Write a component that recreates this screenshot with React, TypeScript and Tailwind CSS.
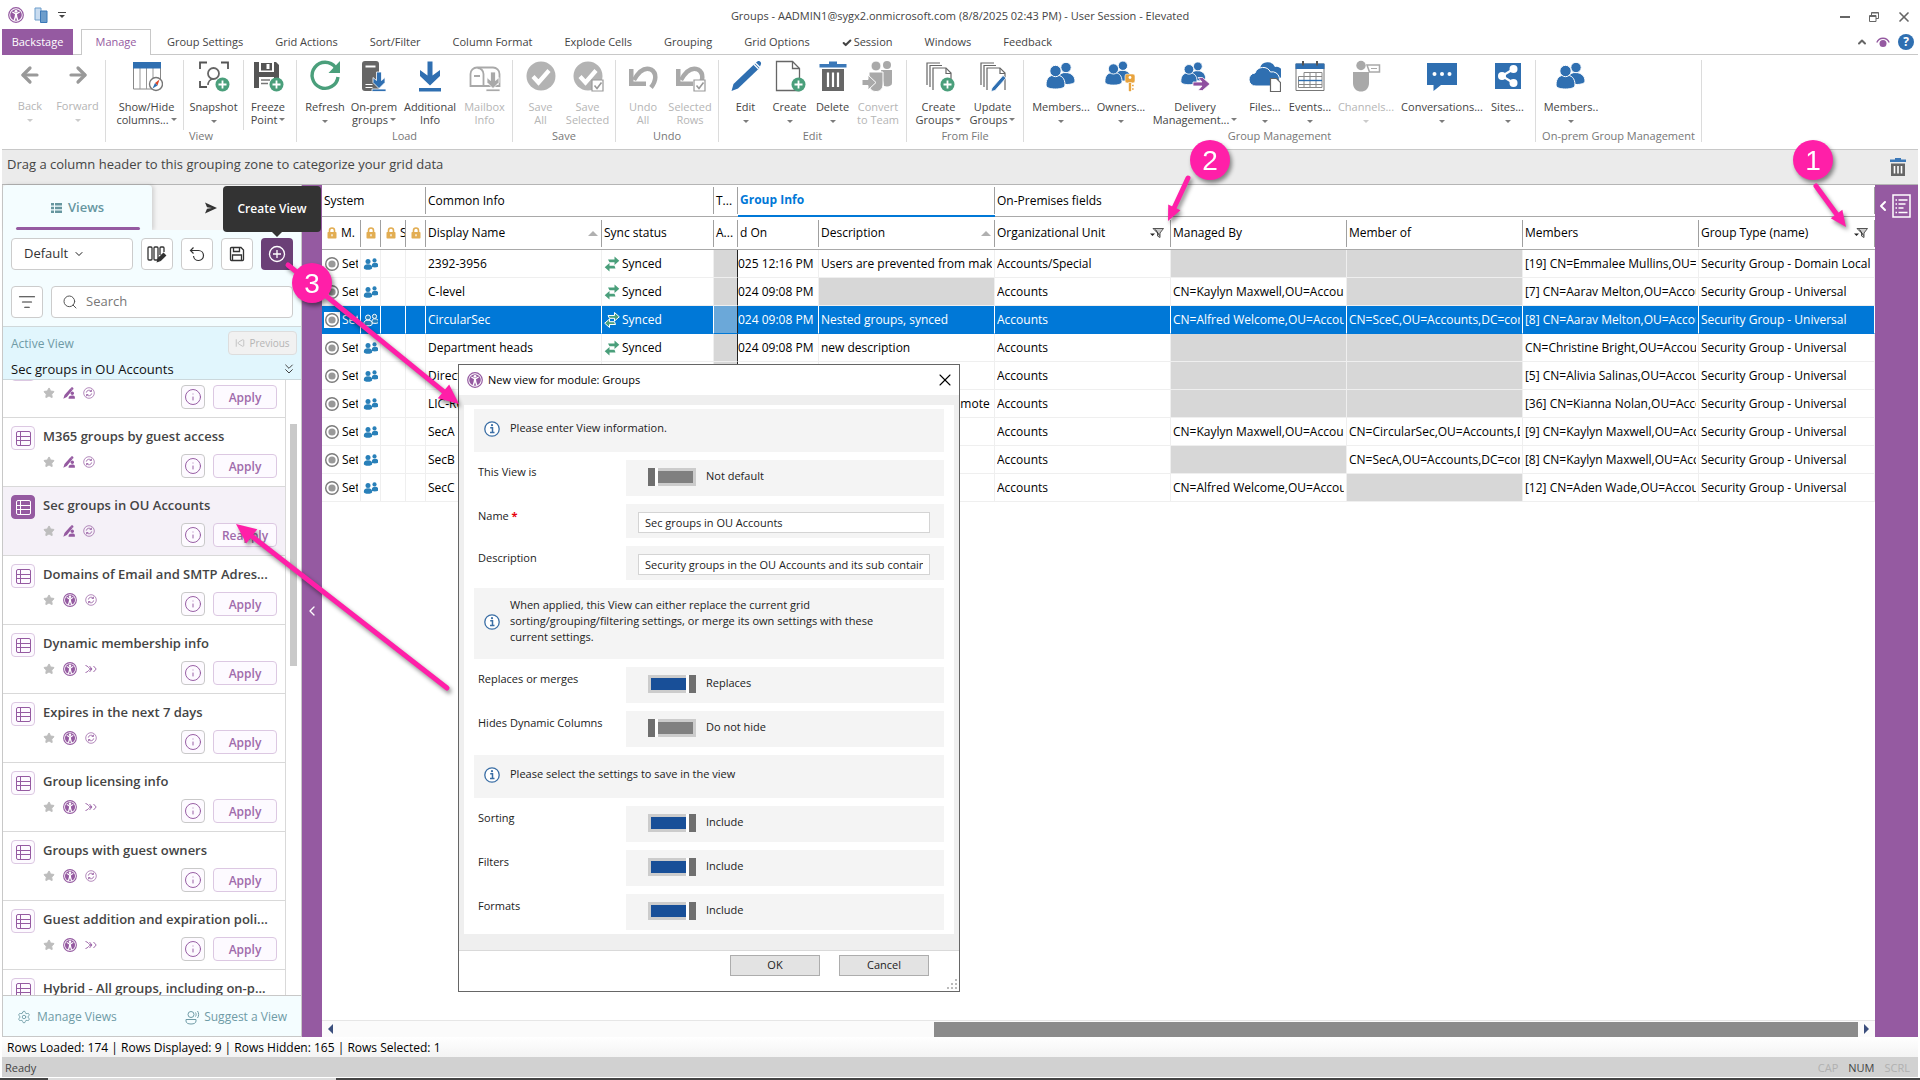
import React, { useState } from 'react';
import clsx from 'clsx';
import {
  ArrowLeft,
  ArrowRight,
  Check,
  ChevronDown,
  ChevronLeft,
  ChevronUp,
  ChevronsDown,
  Info,
  ListFilter,
  Search,
  Settings,
  SkipBack,
  Star,
  X,
} from 'lucide-react';

const BLUE = '#2f6fb1';
const GREEN = '#4a9f7b';
const GRAY = '#a9a9a9';
const DARK = '#666666';
const PURPLE = '#955aa1';
const PINK = '#ff1fa8';

/* ---------- ribbon icons, all on a 32 x 32 grid ---------- */

function Icon({ children }: { children: React.ReactNode }) {
  return (
    <svg viewBox="0 0 32 32" className="size-8" fill="none" aria-hidden="true">
      {children}
    </svg>
  );
}

function PlusBadge() {
  return (
    <g>
      <circle cx="24.5" cy="24.5" r="7" fill={GREEN} />
      <path d="M24.5 20.5v8M20.5 24.5h8" stroke="#fff" strokeWidth="1.8" />
    </g>
  );
}

function CheckBadge() {
  return (
    <g>
      <path d="M20 20h11v11h-11z" fill="#fff" stroke="#999" strokeWidth="1.2" />
      <path d="M22.5 25.500l2.500 3l4.500-6" stroke="#999" strokeWidth="1.6" />
    </g>
  );
}

function PeopleShapes({ color = BLUE }: { color?: string }) {
  return (
    <g fill={color} stroke="#fff" strokeWidth="1">
      <path d="M12 23c0-7 3-10.500 8.500-10.500S30 16 30 21c0 2.500-4 3.500-9 3.500z" />
      <circle cx="21" cy="7.500" r="5.200" />
      <path d="M1 25c0-7 3.500-10 9.500-10s9.500 3 9.500 10c0 3-4.500 4-9.500 4S1 28 1 25z" />
      <circle cx="10.500" cy="11" r="5.700" />
    </g>
  );
}

function PageStack() {
  return (
    <g stroke="#666" strokeWidth="1.200">
      <path d="M4 25V3h13M7 27V5.500h12" />
      <path d="M10 30V8h13l5 5v17" fill="#fff" />
      <path d="M23 8v5.500h5" />
    </g>
  );
}

function DownArrow({ color = BLUE, x = 0 }: { color?: string; x?: number }) {
  return (
    <g transform={`translate(${x} 0)`} fill={color} stroke="#fff" strokeWidth="0.8">
      <path d="M18.500 12h5v8.500l3.500-3v5L21 28.500L15 22.500v-5l3.500 3z" />
      <path d="M14 29h14v2.500h-14z" />
    </g>
  );
}

const icons: Record<string, React.ReactNode> = {
  back: <ArrowLeft className="size-6" color="#999" strokeWidth={3.2} />,
  forward: <ArrowRight className="size-6" color="#999" strokeWidth={3.2} />,
  columns: (
    <Icon>
      <path d="M2.500 3v26h27V3" stroke="#888" />
      <path d="M9 8v21M15.500 8v21M22 8v21" stroke="#999" />
      <path d="M2 2h28v6.500H2z" fill={BLUE} />
      <circle cx="25" cy="24" r="6.500" fill="#fff" stroke="#777" strokeWidth="1.400" />
      <path d="M28.500 19.500l-2 6l-2.500-2.500z" fill="#d9482b" />
      <path d="M21.500 28.500l2.500-5.500l2.500 2.500z" fill={BLUE} />
    </Icon>
  ),
  snapshot: (
    <Icon>
      <path d="M2 9V2.500h7M23 2.500h7V9M2 21v6h7" stroke="#555" strokeWidth="1.800" />
      <circle cx="15.500" cy="13.500" r="5.500" stroke="#666" strokeWidth="1.800" />
      <path d="M10 25c0-3 2-6 5-6" stroke="#666" strokeWidth="1.600" />
      <PlusBadge />
    </Icon>
  ),
  freeze: (
    <Icon>
      <path d="M2 2h22l3 3v23H2z" fill="#555" />
      <path d="M7 2h15v10H7z" fill="#fff" />
      <path d="M9 3h11v7.500H9z" fill="#555" />
      <path d="M14.500 4h3v5h-3z" fill="#fff" />
      <path d="M7 17h15v11H7z" fill="#fff" />
      <path d="M9 20h9M9 23.500h7" stroke="#777" strokeWidth="1.300" />
      <PlusBadge />
    </Icon>
  ),
  refresh: (
    <Icon>
      <path d="M26.500 7.500A13 13 0 1 0 29 17" stroke={GREEN} strokeWidth="3.400" />
      <path d="M31 1v12H19.500z" fill={GREEN} />
    </Icon>
  ),
  server: (
    <Icon>
      <rect x="4" y="1" width="17" height="30" rx="3" fill="#666" />
      <path d="M7.500 6.500h10" stroke="#fff" strokeWidth="2" />
      <path d="M7.500 24.500h7M7.500 27.500h7" stroke="#fff" strokeWidth="1.200" />
      <DownArrow />
    </Icon>
  ),
  download: (
    <Icon>
      <path d="M13.500 1.500h5v14l7.500-5.500v6L16 25.500L6 16v-6l7.500 5.500z" fill={BLUE} />
      <path d="M5 28h22v3.500H5z" fill={BLUE} />
    </Icon>
  ),
  mailbox: (
    <Icon>
      <path
        d="M1.500 26V14a6.500 6.500 0 0 1 6.500-6.500h16a6.500 6.500 0 0 1 6.500 6.500v12z"
        stroke={GRAY}
        strokeWidth="1.800"
      />
      <path d="M14.500 26V14A6 6 0 0 0 8.500 8M5 16h6" stroke={GRAY} strokeWidth="1.800" />
      <DownArrow color={GRAY} x={3} />
    </Icon>
  ),
  check: (
    <Icon>
      <circle cx="16" cy="16" r="14.500" fill="#b3b3b3" />
      <path d="M8 16.500l5.500 6l10.500-12" stroke="#fff" strokeWidth="4.200" />
    </Icon>
  ),
  checkSelected: (
    <Icon>
      <circle cx="16" cy="16" r="14.500" fill="#b3b3b3" />
      <path d="M8 16.500l5.500 6l10.500-12" stroke="#fff" strokeWidth="4.200" />
      <CheckBadge />
    </Icon>
  ),
  undo: (
    <Icon>
      <path d="M7 20C12 11 18 7 24 9.500c6 3.500 5.500 11 0 18" stroke={GRAY} strokeWidth="4.500" />
      <path d="M2 9h4.500v12.500H19V26H2z" fill={GRAY} />
    </Icon>
  ),
  undoSelected: (
    <Icon>
      <path d="M7 20C12 11 18 7 24 9.500c6 3.500 5.500 11 0 18" stroke={GRAY} strokeWidth="4.500" />
      <path d="M2 9h4.500v12.500H19V26H2z" fill={GRAY} />
      <CheckBadge />
    </Icon>
  ),
  pencil: (
    <Icon>
      <path d="M3.500 24L25 3.500l4.500 4.500L8 28.500l-6.500 2.500z" fill={BLUE} />
      <path d="M26 2.500l2-1.500c2-.5 3.500 1.500 3 3l-1 2.500z" fill={BLUE} />
      <path d="M23.500 4l5 5" stroke="#fff" strokeWidth="1.200" />
    </Icon>
  ),
  page: (
    <Icon>
      <path d="M2.500 1.500h16l7 7v22h-23z" stroke="#666" strokeWidth="1.300" fill="#fff" />
      <path d="M18.500 1.500v7h7" stroke="#666" strokeWidth="1.300" />
      <PlusBadge />
    </Icon>
  ),
  trash: (
    <Icon>
      <path d="M2.500 4h27v3.500h-27zM12 1.500h8V4h-8z" fill="#3b78b8" />
      <path d="M5 9h22v22H5z" fill={DARK} />
      <path d="M11 12.500v14.500M16 12.500v14.500M21 12.500v14.500" stroke="#fff" strokeWidth="2.200" />
    </Icon>
  ),
  convert: (
    <Icon>
      <g fill={GRAY}>
        <circle cx="25" cy="5" r="4" />
        <path d="M19 10h11v13c0 3-4 4-8 3z" />
        <g stroke="#fff" strokeWidth="1">
          <circle cx="14" cy="6" r="5" />
          <path d="M7 12h14v12c0 6-4 7.500-7 7.500S7 30 7 24z" />
          <path d="M0 19.500h6V15l8 7.500l-8 7.500v-4.500H0z" />
        </g>
      </g>
    </Icon>
  ),
  pagesPlus: (
    <Icon>
      <PageStack />
      <PlusBadge />
    </Icon>
  ),
  pagesPencil: (
    <Icon>
      <PageStack />
      <path d="M15 28L26 15.500l3 2.500L18 30.500l-4 1z" fill={BLUE} stroke="#fff" strokeWidth="0.800" />
    </Icon>
  ),
  people: (
    <Icon>
      <PeopleShapes />
    </Icon>
  ),
  peopleKey: (
    <Icon>
      <g transform="translate(-1 -1) scale(0.900)">
        <PeopleShapes />
      </g>
      <g fill="#e8a33d" stroke="#fff" strokeWidth="0.600">
        <rect x="20" y="14" width="10" height="9" rx="2" />
        <path d="M23.500 22.500h3v8l-1.500 1.500L23.500 30.500zM26.500 24.500h2.500v2h-2.500zM26.500 28h2.500v2h-2.500z" />
      </g>
      <circle cx="25" cy="17.500" r="1.400" fill="#fff" />
    </Icon>
  ),
  peopleArrow: (
    <Icon>
      <g transform="translate(1 0) scale(0.850)">
        <PeopleShapes />
      </g>
      <path
        d="M14 22h9l-4-4.500h4.500l7.500 6.500l-7.500 6.500H19l4-4.500h-9z"
        fill="#8f4fa0"
        stroke="#fff"
        strokeWidth="0.800"
      />
    </Icon>
  ),
  cloud: (
    <Icon>
      <path d="M14 19a6 6 0 0 1-3-11a8 8 0 0 1 15-1a6 6 0 0 1 3 12z" fill={BLUE} />
      <path
        d="M7 26a6.500 6.500 0 0 1-1-13a8.500 8.500 0 0 1 15.500-1a7 7 0 0 1 3.500 14z"
        fill={BLUE}
        stroke="#fff"
        strokeWidth="1"
      />
      <path d="M21.500 18.500h6l4 4v9h-10z" fill="#fff" stroke="#666" strokeWidth="1.200" />
    </Icon>
  ),
  calendar: (
    <Icon>
      <path d="M2 4h28v26.500H2z" stroke="#777" fill="#fff" />
      <path d="M1.500 3.500h29v5.500h-29z" fill={BLUE} />
      <path d="M9 1v4.500M23 1v4.500" stroke="#555" strokeWidth="2" />
      <path
        d="M10 12.500h18M4.500 16.500H28M4.500 24.500H28M10 12.500v15M16 12.500v15M22 12.500v15M28 12.500v15M4.500 16.500v11M4.500 27.500H28"
        stroke="#888"
      />
      <path d="M4.500 20.500H28" stroke={BLUE} strokeWidth="1.400" />
    </Icon>
  ),
  channel: (
    <Icon>
      <circle cx="11" cy="5.500" r="4.700" fill={GRAY} />
      <path d="M3 12h16v11c0 6-4 8.500-8 8.500S3 29 3 23z" fill={GRAY} />
      <path d="M17 5h12.500v7H19.500z" stroke={GRAY} strokeWidth="1.500" />
      <path d="M21 8.500h6" stroke={GRAY} />
    </Icon>
  ),
  chat: (
    <Icon>
      <path d="M1 3h30v22H15l-7.500 6V25H1z" fill={BLUE} />
      <g fill="#fff">
        <circle cx="8.500" cy="14" r="2" />
        <circle cx="16" cy="14" r="2" />
        <circle cx="23.500" cy="14" r="2" />
      </g>
    </Icon>
  ),
  share: (
    <Icon>
      <path d="M3 3h26v26H3z" fill={BLUE} />
      <path d="M21.500 9L10 16l11.500 7" stroke="#fff" strokeWidth="2.200" />
      <g fill="#fff">
        <circle cx="21.500" cy="9" r="4" />
        <circle cx="10" cy="16" r="4" />
        <circle cx="21.500" cy="23" r="4" />
      </g>
    </Icon>
  ),
};

/* ---------- small icons ---------- */

function Logo({ className }: { className: string }) {
  return (
    <svg viewBox="0 0 16 16" className={className} aria-hidden="true">
      <circle cx="8" cy="8" r="7.300" fill="#fff" stroke={PURPLE} strokeWidth="1.200" />
      <circle cx="8" cy="8" r="5.800" fill={PURPLE} />
      <g fill="#fff">
        <circle cx="8" cy="4.300" r="1.400" />
        <path d="M4 5.500l3 1.800l-.4 2.500l-1.100 3.600l1.300.3L8 10.200l1.200 3.500l1.300-.3l-1.100-3.600L9 7.300l3-1.800l-.6-1L8 6.300L4.600 4.500z" />
      </g>
    </svg>
  );
}

function LockIcon() {
  return (
    <svg viewBox="0 0 10 12" className="ml-[3px] h-3 w-2.5 shrink-0" aria-hidden="true">
      <path d="M2.500 5.500V3.500a2.500 2.500 0 0 1 5 0v2" fill="none" stroke="#e2ad52" strokeWidth="1.600" />
      <rect x="0.500" y="5" width="9" height="6.500" rx="0.800" fill="#e2ad52" />
      <path d="M5 7.200v2" stroke="#fff" strokeWidth="1.300" />
    </svg>
  );
}

function TargetIcon() {
  return (
    <svg viewBox="0 0 16 16" className="size-4 shrink-0 bg-white" aria-hidden="true">
      <circle cx="8" cy="8" r="6.300" fill="none" stroke="#7b7b7b" strokeWidth="1.400" />
      <circle cx="8" cy="8" r="3.600" fill="#999" />
    </svg>
  );
}

function GroupIcon({ selected }: { selected?: boolean }) {
  return (
    <svg
      viewBox="0 0 16 14"
      className="h-3.5 w-4 shrink-0"
      fill="#2980b9"
      stroke={selected ? '#fff' : 'none'}
      strokeWidth="1"
      aria-hidden="true"
    >
      <circle cx="11.500" cy="3.400" r="2.100" />
      <path d="M9 10c-.5-3 .5-4.200 2.800-4.200s3.700 1 3.700 3.200c0 1-2 1.400-3.500 1.400z" />
      <circle cx="5" cy="4.500" r="2.500" />
      <path d="M.8 11c0-2.600 1.200-3.800 4.200-3.800s4.200 1.200 4.200 3.800c0 1.200-1.800 1.800-4.200 1.800S.8 12.200.8 11z" />
    </svg>
  );
}

function SyncIcon({ selected }: { selected?: boolean }) {
  return (
    <svg viewBox="0 0 16 16" className="size-4 shrink-0" aria-hidden="true">
      <g fill="#4a9f7b" stroke={selected ? '#fff' : 'none'} strokeWidth="1">
        <path d="M4 3.500h6.500V.5L15.300 4.800L10.500 9V6.300H5.500z" />
        <path d="M11.500 12.500H5.500v3L.7 11.200L5.500 7v2.700h5z" />
      </g>
    </svg>
  );
}

function FunnelIcon() {
  return (
    <svg viewBox="0 0 14 10" className="mr-[3px] h-2.5 w-3.5 shrink-0" aria-hidden="true">
      <path d="M3 .5h10.500L10 5v4.500L7.500 8V5z" fill="#ccc" stroke="#444" strokeWidth="0.900" />
      <path d="M5.500 1.500l4 6" stroke="#333" strokeWidth="1" />
      <path d="M0 5.500h5L2.500 8z" fill="#222" />
    </svg>
  );
}

function SortMark() {
  return <span className="shrink-0 border-x-5 border-b-5 border-x-transparent border-b-[#b0b0b0]" />;
}

function ViewIcon({ active }: { active?: boolean }) {
  return (
    <span
      className={clsx(
        'flex size-6 shrink-0 items-center justify-center rounded-sm border',
        active ? 'border-[#955aa1] bg-[#955aa1] text-white' : 'border-[#dcc8e2] bg-[#fdfaff] text-[#955aa1]'
      )}
    >
      <svg viewBox="0 0 15 15" className="size-[15px]" fill="none" stroke="currentColor" aria-hidden="true">
        <rect x="0.500" y="0.500" width="14" height="14" rx="1.500" />
        <path d="M4.500 .5v14M.5 5.500h14M.5 9.500h14" />
      </svg>
    </span>
  );
}

function AuthorIcon() {
  return (
    <svg viewBox="0 0 12 12" className="size-3" fill={PURPLE} aria-hidden="true">
      <path d="M.3 11.700L1.500 8L7.500 1.200l2 1.800L3.800 10z" />
      <path d="M8.300.6c1-.8 2.600.4 2 1.600l-.8.8l-1.900-1.700z" />
      <circle cx="9.300" cy="6.300" r="1.700" />
      <path d="M5.500 11.700c0-2.300 1-3.200 3.700-3.200s2.700.9 2.700 3.200z" />
    </svg>
  );
}

function ReloadBadge() {
  return (
    <svg viewBox="0 0 12 12" className="size-3" fill="none" stroke={PURPLE} strokeWidth="0.800" aria-hidden="true">
      <circle cx="6" cy="6" r="5.300" strokeWidth="0.700" />
      <path d="M3.300 5.600a2.800 2.800 0 0 1 4.900-1.400M8.700 6.400a2.800 2.800 0 0 1-4.900 1.400" />
      <path d="M8.500 2.700v1.800H6.700M3.500 9.300V7.500h1.800" />
    </svg>
  );
}

function MergeBadge() {
  return (
    <svg viewBox="0 0 12 9" className="h-2.5 w-3" fill="none" stroke={PURPLE} strokeWidth="0.900" aria-hidden="true">
      <path d="M.5 1c2.500 0 3 3.500 6 3.500C3.500 4.500 3 8 .5 8M4.500 1.500L7 4.500L4.500 7.500M8.500 1.500l2.700 3L8.500 7.500" />
    </svg>
  );
}

/* ---------- ribbon ---------- */

type Tool = {
  icon: string;
  lines: string[];
  width: string;
  arrow?: boolean;
  disabled?: boolean;
  divider?: boolean;
};

const ribbon: { label: string; tools: Tool[]; className?: string }[] = [
  {
    label: '',
    tools: [
      { icon: 'back', lines: ['Back'], width: 'w-[48px]', arrow: true, disabled: true },
      { icon: 'forward', lines: ['Forward'], width: 'w-[47px]', arrow: true, disabled: true },
    ],
  },
  {
    label: 'View',
    tools: [
      { icon: 'columns', lines: ['Show/Hide', 'columns...'], width: 'w-[74px]', arrow: true, divider: true },
      { icon: 'snapshot', lines: ['Snapshot'], width: 'w-[60px]', arrow: true, divider: true },
      { icon: 'freeze', lines: ['Freeze', 'Point'], width: 'w-[48px]', arrow: true },
    ],
  },
  {
    label: 'Load',
    tools: [
      { icon: 'refresh', lines: ['Refresh'], width: 'w-[48px]', arrow: true },
      { icon: 'server', lines: ['On-prem', 'groups'], width: 'w-[50px]', arrow: true },
      { icon: 'download', lines: ['Additional', 'Info'], width: 'w-[62px]' },
      { icon: 'mailbox', lines: ['Mailbox', 'Info'], width: 'w-[47px]', disabled: true },
    ],
  },
  {
    label: 'Save',
    tools: [
      { icon: 'check', lines: ['Save', 'All'], width: 'w-[47px]', disabled: true },
      { icon: 'checkSelected', lines: ['Save', 'Selected'], width: 'w-[47px]', disabled: true },
    ],
  },
  {
    label: 'Undo',
    tools: [
      { icon: 'undo', lines: ['Undo', 'All'], width: 'w-[46px]', disabled: true },
      { icon: 'undoSelected', lines: ['Selected', 'Rows'], width: 'w-[48px]', disabled: true },
    ],
  },
  {
    label: 'Edit',
    tools: [
      { icon: 'pencil', lines: ['Edit'], width: 'w-[45px]', arrow: true },
      { icon: 'page', lines: ['Create'], width: 'w-[43px]', arrow: true },
      { icon: 'trash', lines: ['Delete'], width: 'w-[43px]', arrow: true },
      { icon: 'convert', lines: ['Convert', 'to Team'], width: 'w-[48px]', disabled: true },
    ],
  },
  {
    label: 'From File',
    tools: [
      { icon: 'pagesPlus', lines: ['Create', 'Groups'], width: 'w-[55px]', arrow: true },
      { icon: 'pagesPencil', lines: ['Update', 'Groups'], width: 'w-[53px]', arrow: true },
    ],
  },
  {
    label: 'Group Management',
    tools: [
      { icon: 'people', lines: ['Members...'], width: 'w-[66px]', arrow: true },
      { icon: 'peopleKey', lines: ['Owners...'], width: 'w-[54px]', arrow: true },
      { icon: 'peopleArrow', lines: ['Delivery', 'Management...'], width: 'w-[94px]', arrow: true },
      { icon: 'cloud', lines: ['Files...'], width: 'w-[46px]', arrow: true },
      { icon: 'calendar', lines: ['Events...'], width: 'w-[44px]', arrow: true },
      { icon: 'channel', lines: ['Channels...'], width: 'w-[68px]', arrow: true, disabled: true },
      { icon: 'chat', lines: ['Conversations...'], width: 'w-[84px]', arrow: true },
      { icon: 'share', lines: ['Sites...'], width: 'w-[47px]', arrow: true },
    ],
  },
  {
    label: 'On-prem Group Management',
    tools: [{ icon: 'people', lines: ['Members..'], width: 'w-[62px]', arrow: true }],
    className: 'w-[166px]',
  },
];

function Caret() {
  return <span className="inline-block border-x-3 border-t-3 border-x-transparent border-t-current opacity-70" />;
}

function RibbonButton({ tool }: { tool: Tool }) {
  return (
    <button
      type="button"
      disabled={tool.disabled}
      className={clsx(
        'flex h-[70px] shrink-0 flex-col items-center text-[11px] leading-[13px] whitespace-nowrap',
        tool.width,
        tool.disabled ? 'text-[#b5b5b5]' : 'text-[#444]',
        tool.divider && 'border-r border-[#dcdcdc]'
      )}
    >
      <span className="mb-2 flex h-8 items-center justify-center">{icons[tool.icon]}</span>
      <span>{tool.lines[0]}</span>
      <span className={clsx('flex items-center gap-0.5', tool.lines[1] ? 'h-[13px]' : 'h-[19px]')}>
        {tool.lines[1]}
        {tool.arrow && <Caret />}
      </span>
    </button>
  );
}

function Ribbon() {
  return (
    <div className="flex h-[95px] shrink-0 border-b border-[#c8c8c8] pt-[5px] pb-[7px]">
      {ribbon.map((group) => (
        <section
          key={group.label}
          className={clsx('flex shrink-0 flex-col border-r border-[#dcdcdc] px-1', group.className)}
        >
          <div className="flex">
            {group.tools.map((tool) => (
              <RibbonButton key={tool.lines.join(' ')} tool={tool} />
            ))}
          </div>
          <h2 className="text-center text-[11px] leading-3 whitespace-nowrap text-[#777]">{group.label}</h2>
        </section>
      ))}
    </div>
  );
}

const tabs = [
  'Group Settings',
  'Grid Actions',
  'Sort/Filter',
  'Column Format',
  'Explode Cells',
  'Grouping',
  'Grid Options',
  'Session',
  'Windows',
  'Feedback',
];

function TitleBar() {
  return (
    <header>
      <div className="grid h-[29px] grid-cols-[1fr_auto_1fr] items-center">
        <div className="flex items-center gap-2.5 pl-1.5">
          <Logo className="size-4" />
          <button type="button" aria-label="Duplicate window" className="flex items-center">
            <svg viewBox="0 0 14 16" className="h-4 w-3.5" aria-hidden="true">
              <path d="M1 1h6v12H1z" fill="#c9dcf0" stroke="#6d9dcb" />
              <path d="M6.500 4h6.500v11.500H6.500z" fill="#6d9dcb" stroke="#3b78b8" />
            </svg>
          </button>
          <button type="button" aria-label="Customize toolbar" className="flex flex-col items-center gap-0.5">
            <span className="h-px w-2 bg-[#444]" />
            <span className="border-x-3 border-t-3 border-x-transparent border-t-[#444]" />
          </button>
        </div>
        <h1 className="pt-1 text-[11px] text-[#444]">
          Groups - AADMIN1@sygx2.onmicrosoft.com (8/8/2025 02:43 PM) - User Session - Elevated
        </h1>
        <div className="flex items-center justify-end gap-4 pt-1 pr-1.5 text-[#666]">
          <button type="button" aria-label="Minimize" className="flex size-3 items-center">
            <span className="h-0.5 w-2.5 bg-[#666]" />
          </button>
          <button type="button" aria-label="Restore">
            <svg viewBox="0 0 12 12" className="size-3" fill="none" stroke="currentColor" aria-hidden="true">
              <path d="M3.500 4V1.500h7v6H8M3.500 2h7" />
              <path d="M1.500 4.500h6.500v6H1.500zM1.500 5.500h6.500" />
            </svg>
          </button>
          <button type="button" aria-label="Close">
            <X className="size-4" strokeWidth={2.500} />
          </button>
        </div>
      </div>
      <nav className="flex h-[26px] text-[11px] text-[#444]">
        <button type="button" className="w-[71px] bg-[#955aa1] text-white">
          Backstage
        </button>
        <span className="w-2 border-b border-[#c8c8c8]" />
        <button type="button" className="w-[70px] border border-b-0 border-[#c8c8c8] text-[#955aa1]">
          Manage
        </button>
        <div className="flex flex-1 border-b border-[#c8c8c8] pt-0.5">
          {tabs.map((tab) => (
            <button key={tab} type="button" className="flex items-center gap-0.5 px-4 whitespace-nowrap">
              {tab === 'Session' && <Check className="size-2.5" strokeWidth={5} />}
              {tab}
            </button>
          ))}
        </div>
        <div className="flex items-center gap-2 border-b border-[#c8c8c8] pr-1 text-[#666]">
          <button type="button" aria-label="Collapse ribbon">
            <ChevronUp className="size-3" strokeWidth={4} />
          </button>
          <button type="button" aria-label="Show">
            <svg viewBox="0 0 14 12" className="h-3 w-3.5" aria-hidden="true">
              <path d="M.8 6.500C3 .8 11 .8 13.200 6.500" fill="none" stroke={PURPLE} strokeWidth="1.300" />
              <circle cx="7" cy="7.500" r="3.500" fill={PURPLE} />
            </svg>
          </button>
          <button
            type="button"
            aria-label="Help"
            className="size-4 rounded-full bg-[#2f6fb1] text-[12px] leading-4 font-bold text-white"
          >
            ?
          </button>
        </div>
      </nav>
    </header>
  );
}

/* ---------- views panel ---------- */

type View = { name: string; author: 'me' | 'app'; badge: 'reload' | 'merge'; active?: boolean };

const views: View[] = [
  { name: 'M365 groups', author: 'me', badge: 'reload' },
  { name: 'M365 groups by guest access', author: 'me', badge: 'reload' },
  { name: 'Sec groups in OU Accounts', author: 'me', badge: 'reload', active: true },
  { name: 'Domains of Email and SMTP Adres...', author: 'app', badge: 'reload' },
  { name: 'Dynamic membership info', author: 'app', badge: 'merge' },
  { name: 'Expires in the next 7 days', author: 'app', badge: 'reload' },
  { name: 'Group licensing info', author: 'app', badge: 'merge' },
  { name: 'Groups with guest owners', author: 'app', badge: 'reload' },
  { name: 'Guest addition and expiration poli...', author: 'app', badge: 'merge' },
  { name: 'Hybrid - All groups, including on-p...', author: 'app', badge: 'reload' },
];

function ViewItem({ view }: { view: View }) {
  return (
    <li
      className={clsx(
        'flex h-[69px] gap-2 border-b border-[#d9d9d9] px-2 pt-2',
        view.active ? 'bg-[#f5f1f8]' : 'bg-white'
      )}
    >
      <ViewIcon active={view.active} />
      <div className="flex min-w-0 flex-1 flex-col">
        <h3 className="h-7 truncate text-[13px] leading-5 font-semibold text-[#444]">{view.name}</h3>
        <div className="flex gap-2">
          <div className="flex h-4 flex-1 items-center gap-2">
            <Star className="size-3" fill="#bdbdbd" color="#bdbdbd" />
            {view.author === 'me' ? <AuthorIcon /> : <Logo className="size-3.5" />}
            {view.badge === 'reload' ? <ReloadBadge /> : <MergeBadge />}
          </div>
          <button
            type="button"
            aria-label={`About ${view.name}`}
            className="flex size-6 items-center justify-center rounded-sm border border-[#c9c9c9] bg-[#fdfaff] text-[#955aa1]"
          >
            <Info className="size-[18px]" strokeWidth={1.300} />
          </button>
          <button
            type="button"
            className="h-6 w-16 rounded-sm border border-[#dcc8e2] bg-[#fdfaff] pt-0.5 text-[12px] leading-5 font-semibold text-[#a06bab]"
          >
            {view.active ? 'Reapply' : 'Apply'}
          </button>
        </div>
      </div>
    </li>
  );
}

const toolButton = 'flex size-8 items-center justify-center rounded-sm border border-[#ccc] bg-white text-[#333]';

function ViewsPanel() {
  const [query, setQuery] = useState('');

  return (
    <aside className="flex w-[300px] shrink-0 flex-col border-x border-b border-[#c8c8c8] bg-white">
      <div className="flex h-[45px] shrink-0 bg-[#f4f4f4]">
        <button
          type="button"
          className="flex w-[149px] flex-col items-center justify-end rounded-t-sm bg-[#f4fdff] text-[13px] font-semibold text-[#66969f] shadow-[2px_0_4px_rgba(0,0,0,0.15)]"
        >
          <span className="flex flex-1 items-center gap-1.5 pt-1">
            <svg viewBox="0 0 11 10" className="h-2.5 w-[11px]" fill="currentColor" aria-hidden="true">
              <path d="M0 0h3v2.500H0zM4 0h7v2.500H4zM0 3.700h3v2.500H0zM4 3.700h7v2.500H4zM0 7.500h3V10H0zM4 7.500h7V10H4z" />
            </svg>
            Views
          </span>
          <span className="h-[3px] w-[124px] rounded-full bg-[#955aa1]" />
        </button>
        <button type="button" aria-label="Jobs" className="flex flex-1 items-center pl-[53px]">
          <svg viewBox="0 0 12 12" className="size-3" fill="#333" aria-hidden="true">
            <path d="M0 .5L12 6L0 11.500L2 6.800L7 6L2 5.200z" />
          </svg>
        </button>
      </div>

      <div className="flex shrink-0 flex-col gap-4 border-b border-[#d0d8da] bg-[#f4fdff] p-2">
        <div className="flex gap-2">
          <div className="relative flex flex-1 items-center">
            <select
              aria-label="Layout"
              className="h-8 w-full appearance-none rounded-sm border border-[#ccc] bg-white pl-3 text-[13px] text-[#333]"
            >
              <option>Default</option>
            </select>
            <ChevronDown className="pointer-events-none absolute left-[62px] size-3" strokeWidth={1.800} />
          </div>
          <button type="button" aria-label="Edit columns" className={toolButton}>
            <svg
              viewBox="0 0 20 18"
              className="h-[18px] w-5"
              fill="none"
              stroke="currentColor"
              strokeWidth="1.300"
              aria-hidden="true"
            >
              <rect x="1" y="2" width="4" height="13" rx="1" />
              <rect x="7" y="2" width="4" height="13" rx="1" />
              <path d="M13 10V3a1 1 0 0 1 1-1h2a1 1 0 0 1 1 1v4" />
              <path d="M10.500 16.500l1-3.500l5-4.500l2 2l-5 5z" fill="currentColor" />
            </svg>
          </button>
          <button type="button" aria-label="Reset" className={toolButton}>
            <svg
              viewBox="0 0 16 16"
              className="size-4"
              fill="none"
              stroke="currentColor"
              strokeWidth="1.200"
              aria-hidden="true"
            >
              <path d="M1.500 4.500H9.500a5 5 0 1 1-5 5.500" />
              <path d="M4.500 1.500l-3 3l3 3" />
            </svg>
          </button>
          <button type="button" aria-label="Save view" className={toolButton}>
            <svg
              viewBox="0 0 16 16"
              className="size-4"
              fill="none"
              stroke="currentColor"
              strokeWidth="1.300"
              aria-hidden="true"
            >
              <path d="M1.500 2.500a1 1 0 0 1 1-1h9.500l2.500 2.500v9.500a1 1 0 0 1-1 1h-11a1 1 0 0 1-1-1z" />
              <path d="M4.500 1.500v4h6v-4M3.500 14.500V9h9v5.500" />
            </svg>
          </button>
          <div className="relative">
            <button
              type="button"
              aria-label="Create View"
              className="flex size-8 items-center justify-center rounded-sm bg-[#6b4077] text-white"
            >
              <svg
                viewBox="0 0 18 18"
                className="size-[18px]"
                fill="none"
                stroke="currentColor"
                strokeWidth="1.300"
                aria-hidden="true"
              >
                <circle cx="9" cy="9" r="7.500" />
                <path d="M9 5v8M5 9h8" />
              </svg>
            </button>
            <div
              role="tooltip"
              className="absolute bottom-[38px] left-1/2 z-20 flex h-[46px] w-[98px] -translate-x-[54px] items-center justify-center rounded-sm bg-[#333] text-[12px] font-semibold whitespace-nowrap text-white"
            >
              Create View
              <span className="absolute top-full left-[49px] border-x-5 border-t-5 border-x-transparent border-t-[#333]" />
            </div>
          </div>
        </div>
        <div className="flex gap-2">
          <button type="button" aria-label="Filter views" className={toolButton}>
            <ListFilter className="size-[18px]" strokeWidth={1.600} />
          </button>
          <label className="flex h-8 flex-1 items-center gap-2 rounded-sm border border-[#ccc] bg-white px-2.5">
            <Search className="size-4 text-[#555]" strokeWidth={1.500} />
            <input
              aria-label="Search views"
              placeholder="Search"
              value={query}
              onChange={(e) => setQuery(e.target.value)}
              className="min-w-0 flex-1 bg-transparent text-[13px] outline-none placeholder:text-[#777]"
            />
          </label>
        </div>
      </div>

      <div className="flex h-[53px] shrink-0 flex-col justify-between border-b border-[#ccd8dc] bg-[#e1f6fd] pt-1 pr-1 pl-2">
        <div className="flex items-center justify-between">
          <h2 className="pt-0.5 text-[12px] font-medium text-[#6f9ba6]">Active View</h2>
          <button
            type="button"
            disabled
            className="flex h-6 w-[69px] items-center justify-center gap-1 rounded-sm border border-[#ddd] bg-[#f1f1f1] text-[10px] text-[#b5b5b5]"
          >
            <SkipBack className="size-2.5" strokeWidth={1.800} />
            Previous
          </button>
        </div>
        <div className="flex items-center justify-between">
          <p className="text-[13px] leading-5 font-medium text-[#111]">Sec groups in OU Accounts</p>
          <ChevronsDown className="size-4 text-[#444]" strokeWidth={1.500} />
        </div>
      </div>

      <div className="flex min-h-0 flex-1 overflow-hidden">
        <ul className="-mt-[31px] w-[283px] border-r border-[#d9d9d9]">
          {views
            .filter((view) => view.name.toLowerCase().includes(query.toLowerCase()))
            .map((view) => (
              <ViewItem key={view.name} view={view} />
            ))}
        </ul>
        <div className="mt-11 ml-1 h-[242px] w-[7px] bg-[#c9c9c9]" />
      </div>

      <div className="flex h-[41px] shrink-0 items-center justify-between border-t border-[#c8c8c8] bg-[#f4fdff] px-3.5 pt-0.5 text-[12px] font-medium text-[#6f9ba6]">
        <button type="button" className="flex items-center gap-1.5">
          <Settings className="size-3.5" strokeWidth={1.500} />
          Manage Views
        </button>
        <button type="button" className="flex items-center gap-1">
          <svg viewBox="0 0 15 15" className="size-[15px]" fill="none" stroke="currentColor" aria-hidden="true">
            <circle cx="6" cy="4.500" r="3" />
            <path d="M1 9.500h10v1.500c0 2-2 3-5 3s-5-1-5-3zM10.500 2.500c.8 1 .8 3 0 4M12.500 1c1.500 2 1.500 5 0 7" />
          </svg>
          Suggest a View
        </button>
      </div>
    </aside>
  );
}

/* ---------- grid ---------- */

type Row = {
  name: string;
  createdOn: string;
  description?: string;
  unit: string;
  managedBy?: string;
  memberOf?: string;
  members: string;
  type: string;
};

const UNIVERSAL = 'Security Group - Universal';

const rows: Row[] = [
  {
    name: '2392-3956',
    createdOn: '025 12:16 PM',
    description: 'Users are prevented from making changes',
    unit: 'Accounts/Special',
    members: '[19] CN=Emmalee Mullins,OU=Accounts',
    type: 'Security Group - Domain Local',
  },
  {
    name: 'C-level',
    createdOn: '024 09:08 PM',
    unit: 'Accounts',
    managedBy: 'CN=Kaylyn Maxwell,OU=Accounts',
    members: '[7] CN=Aarav Melton,OU=Accounts',
    type: UNIVERSAL,
  },
  {
    name: 'CircularSec',
    createdOn: '024 09:08 PM',
    description: 'Nested groups, synced',
    unit: 'Accounts',
    managedBy: 'CN=Alfred Welcome,OU=Accounts',
    memberOf: 'CN=SceC,OU=Accounts,DC=corp',
    members: '[8] CN=Aarav Melton,OU=Accounts',
    type: UNIVERSAL,
  },
  {
    name: 'Department heads',
    createdOn: '024 09:08 PM',
    description: 'new description',
    unit: 'Accounts',
    members: 'CN=Christine Bright,OU=Accounts',
    type: UNIVERSAL,
  },
  {
    name: 'Directors',
    createdOn: '024 09:08 PM',
    description: 'Directors',
    unit: 'Accounts',
    members: '[5] CN=Alivia Salinas,OU=Accounts',
    type: UNIVERSAL,
  },
  {
    name: 'LIC-Remote',
    createdOn: '024 09:08 PM',
    description: 'License groups for the remote users',
    unit: 'Accounts',
    members: '[36] CN=Kianna Nolan,OU=Accounts',
    type: UNIVERSAL,
  },
  {
    name: 'SecA',
    createdOn: '024 09:08 PM',
    description: 'Nested groups',
    unit: 'Accounts',
    managedBy: 'CN=Kaylyn Maxwell,OU=Accounts',
    memberOf: 'CN=CircularSec,OU=Accounts,DC=corp',
    members: '[9] CN=Kaylyn Maxwell,OU=Accounts',
    type: UNIVERSAL,
  },
  {
    name: 'SecB',
    createdOn: '024 09:08 PM',
    description: 'Nested groups',
    unit: 'Accounts',
    memberOf: 'CN=SecA,OU=Accounts,DC=corp',
    members: '[8] CN=Kaylyn Maxwell,OU=Accounts',
    type: UNIVERSAL,
  },
  {
    name: 'SecC',
    createdOn: '024 09:08 PM',
    description: 'Nested groups',
    unit: 'Accounts',
    managedBy: 'CN=Alfred Welcome,OU=Accounts',
    members: '[12] CN=Aden Wade,OU=Accounts',
    type: UNIVERSAL,
  },
];

function Cell({
  children,
  selected,
  empty,
  flush,
  className,
}: {
  children?: React.ReactNode;
  selected: boolean;
  empty?: boolean;
  flush?: boolean;
  className?: string;
}) {
  return (
    <td
      className={clsx(
        'h-7 overflow-hidden border-r border-b p-0',
        !className && (selected ? 'border-r-white' : 'border-r-[#efefef]'),
        selected ? 'border-b-[#0078d7]' : 'border-b-[#efefef]',
        empty && (selected ? 'bg-[#6ba8d9]' : 'bg-[#d7d7d7]'),
        className
      )}
    >
      <div
        className={clsx(
          'mr-0.5 flex items-center gap-0.5 overflow-hidden pt-px whitespace-nowrap',
          !flush && 'ml-0.5'
        )}
      >
        {children}
      </div>
    </td>
  );
}

function Head({
  children,
  mark,
  span,
  active,
}: {
  children?: React.ReactNode;
  mark?: React.ReactNode;
  span?: number;
  active?: boolean;
}) {
  return (
    <th
      colSpan={span}
      className={clsx(
        'overflow-hidden p-0 text-left',
        active ? 'border-b-2 border-[#0078d7] font-bold text-[#0078d7]' : 'border-b border-[#a9a9a9] font-normal'
      )}
    >
      <div className="flex h-[27px] items-center gap-1 overflow-hidden border-r border-[#a0a0a0] pr-[3px] pl-0.5 whitespace-nowrap">
        {children}
        {mark && <span className="ml-auto flex shrink-0">{mark}</span>}
      </div>
    </th>
  );
}

function Grid() {
  const [selectedName, setSelectedName] = useState('CircularSec');

  return (
    <table className="w-full table-fixed border-separate border-spacing-0 text-[12px] leading-4 text-black">
      <colgroup>
        <col className="w-[39px]" />
        <col className="w-5" />
        <col className="w-[25px]" />
        <col className="w-5" />
        <col />
        <col className="w-28" />
        <col className="w-6" />
        <col className="w-[81px]" />
        <col />
        <col />
        <col />
        <col />
        <col />
        <col />
      </colgroup>
      <thead>
        <tr className="h-8">
          <Head span={4}>System</Head>
          <Head span={2}>Common Info</Head>
          <Head>T...</Head>
          <Head span={2} active>
            Group Info
          </Head>
          <Head span={5}>On-Premises fields</Head>
        </tr>
        <tr className="h-[33px]">
          <Head>
            <LockIcon />
            M.
          </Head>
          <Head>
            <LockIcon />
          </Head>
          <Head>
            <LockIcon />S
          </Head>
          <Head>
            <LockIcon />
          </Head>
          <Head mark={<SortMark />}>Display Name</Head>
          <Head>Sync status</Head>
          <Head>A...</Head>
          <Head>d On</Head>
          <Head mark={<SortMark />}>Description</Head>
          <Head mark={<FunnelIcon />}>Organizational Unit</Head>
          <Head>Managed By</Head>
          <Head>Member of</Head>
          <Head>Members</Head>
          <Head mark={<FunnelIcon />}>Group Type (name)</Head>
        </tr>
      </thead>
      <tbody>
        {rows.map((row) => {
          const selected = row.name === selectedName;
          return (
            <tr
              key={row.name}
              onClick={() => setSelectedName(row.name)}
              className={selected ? 'bg-[#0078d7] text-white' : undefined}
            >
              <Cell selected={selected}>
                <TargetIcon />
                Set
              </Cell>
              <Cell selected={selected}>
                <GroupIcon selected={selected} />
              </Cell>
              <Cell selected={selected} />
              <Cell selected={selected} />
              <Cell selected={selected}>{row.name}</Cell>
              <Cell selected={selected}>
                <SyncIcon selected={selected} />
                Synced
              </Cell>
              <Cell selected={selected} empty className="border-r-[#222]" />
              <Cell selected={selected} flush>
                {row.createdOn}
              </Cell>
              <Cell selected={selected} empty={!row.description}>
                {row.description}
              </Cell>
              <Cell selected={selected}>{row.unit}</Cell>
              <Cell selected={selected} empty={!row.managedBy}>
                {row.managedBy}
              </Cell>
              <Cell selected={selected} empty={!row.memberOf}>
                {row.memberOf}
              </Cell>
              <Cell selected={selected}>{row.members}</Cell>
              <Cell selected={selected}>{row.type}</Cell>
            </tr>
          );
        })}
      </tbody>
    </table>
  );
}

/* ---------- new view window ---------- */

function Toggle({ id, off, on, defaultOn }: { id: string; off: string; on: string; defaultOn?: boolean }) {
  const [checked, setChecked] = useState(Boolean(defaultOn));

  return (
    <div className="flex h-9 items-start bg-[#f4f4f4] pt-2 pl-[22px]">
      <label className="relative flex cursor-pointer gap-2.5">
        <input
          id={id}
          type="checkbox"
          className="absolute size-px opacity-0"
          checked={checked}
          onChange={(e) => setChecked(e.target.checked)}
        />
        <span className={clsx('flex h-[18px] w-12 gap-[3px] bg-white', !checked && 'flex-row-reverse')}>
          <span
            className={clsx(
              'h-full flex-1 border-y-3 border-[#ccc]',
              checked ? 'border-l-3 bg-[#184f98]' : 'border-r-3 bg-[#808080]'
            )}
          />
          <span className="h-full w-[7px] bg-[#6f6f6f]" />
        </span>
        <span className="leading-4">{checked ? on : off}</span>
      </label>
    </div>
  );
}

function FormRow({
  id,
  label,
  required,
  children,
}: {
  id: string;
  label: string;
  required?: boolean;
  children: React.ReactNode;
}) {
  return (
    <div className="grid grid-cols-[152px_1fr]">
      <label htmlFor={id} className="pt-1 pl-1 leading-4">
        {label}
        {required && <span className="font-bold text-red-600"> *</span>}
      </label>
      {children}
    </div>
  );
}

function Notice({ children }: { children: React.ReactNode }) {
  return (
    <div className="flex min-h-[43px] items-center gap-2.5 bg-[#f4f4f4] px-2.5 pb-1">
      <svg viewBox="0 0 16 16" className="size-4 shrink-0" aria-hidden="true">
        <circle cx="8" cy="8" r="7.200" fill="#fff" stroke="#3a6ea5" strokeWidth="1.300" />
        <path d="M6.200 6.800h2.300v4.500M6 11.500h4.500" fill="none" stroke="#3a6ea5" strokeWidth="1.500" />
        <circle cx="8" cy="4.200" r="1.100" fill="#3a6ea5" />
      </svg>
      <p className="flex-1 pr-10 pb-0.5 leading-4">{children}</p>
    </div>
  );
}

function TextField({ id, defaultValue }: { id: string; defaultValue: string }) {
  return (
    <div className="h-[34px] bg-[#f4f4f4] pt-2 pr-3.5 pl-3">
      <input
        id={id}
        type="text"
        defaultValue={defaultValue}
        className="h-[21px] w-full border border-[#d4d4d4] bg-white px-1.5 outline-none"
      />
    </div>
  );
}

function NewViewWindow() {
  return (
    <form
      role="dialog"
      aria-labelledby="new-view-title"
      onSubmit={(e) => e.preventDefault()}
      className="absolute top-[364px] left-[458px] z-10 w-[502px] border border-[#666] bg-white text-[11px] text-[#222]"
    >
      <div className="flex h-[30px] items-center gap-[5px] px-2">
        <Logo className="size-4" />
        <h2 id="new-view-title" className="text-black">
          New view for module: Groups
        </h2>
        <button type="button" aria-label="Close window" className="-mr-1 ml-auto text-black">
          <X className="size-5" strokeWidth={1.300} />
        </button>
      </div>
      <div className="bg-[#efefef] px-[5px] pt-2.5 pb-4">
        <div className="flex flex-col gap-2 bg-white px-2.5 py-1">
          <Notice>Please enter View information.</Notice>
          <FormRow id="is-default" label="This View is">
            <Toggle id="is-default" off="Not default" on="Default" />
          </FormRow>
          <FormRow id="view-name" label="Name" required>
            <TextField id="view-name" defaultValue="Sec groups in OU Accounts" />
          </FormRow>
          <FormRow id="view-description" label="Description">
            <TextField id="view-description" defaultValue="Security groups in the OU Accounts and its sub containers" />
          </FormRow>
          <div className="grid h-[71px]">
            <Notice>
              When applied, this View can either replace the current grid sorting/grouping/filtering settings, or
              merge its own settings with these current settings.
            </Notice>
          </div>
          <FormRow id="replaces" label="Replaces or merges">
            <Toggle id="replaces" off="Merges" on="Replaces" defaultOn />
          </FormRow>
          <FormRow id="hides" label="Hides Dynamic Columns">
            <Toggle id="hides" off="Do not hide" on="Hide" />
          </FormRow>
          <Notice>Please select the settings to save in the view</Notice>
          <FormRow id="sorting" label="Sorting">
            <Toggle id="sorting" off="Do not include" on="Include" defaultOn />
          </FormRow>
          <FormRow id="filters" label="Filters">
            <Toggle id="filters" off="Do not include" on="Include" defaultOn />
          </FormRow>
          <FormRow id="formats" label="Formats">
            <Toggle id="formats" off="Do not include" on="Include" defaultOn />
          </FormRow>
        </div>
      </div>
      <div className="relative flex h-[41px] justify-end gap-[19px] border-t border-[#d9d9d9] pt-1 pr-[30px]">
        <button type="submit" className="h-[21px] w-[90px] border border-[#adadad] bg-[#e3e3e3]">
          OK
        </button>
        <button type="button" className="h-[21px] w-[90px] border border-[#adadad] bg-[#e3e3e3]">
          Cancel
        </button>
        <svg viewBox="0 0 12 12" className="absolute right-px bottom-px size-3" fill="#bbb" aria-hidden="true">
          <path d="M9 1h2v2H9zM9 5h2v2H9zM5 5h2v2H5zM9 9h2v2H9zM5 9h2v2H5zM1 9h2v2H1z" />
        </svg>
      </div>
    </form>
  );
}

/* ---------- numbered callouts ---------- */

function Arrow({ from, to, size }: { from: [number, number]; to: [number, number]; size: number }) {
  const dx = to[0] - from[0];
  const dy = to[1] - from[1];
  const length = Math.hypot(dx, dy);
  const angle = (Math.atan2(dy, dx) * 180) / Math.PI;

  return (
    <g transform={`translate(${from[0]} ${from[1]}) rotate(${angle})`}>
      <path d={`M0 0H${length - size + 2}`} stroke={PINK} strokeWidth="5" strokeLinecap="round" />
      <path d={`M${length} 0l${-size} ${-size * 0.45}v${size * 0.9}z`} fill={PINK} />
    </g>
  );
}

function Bubble({ x, y, n }: { x: number; y: number; n: number }) {
  return (
    <g>
      <circle cx={x} cy={y} r="20" fill={PINK} />
      <text
        x={x}
        y={y + 10}
        textAnchor="middle"
        fill="#fff"
        className="font-['Liberation_Sans',Arial,sans-serif] text-[28px]"
      >
        {n}
      </text>
    </g>
  );
}

function Callouts() {
  return (
    <svg
      className="pointer-events-none absolute inset-0 z-30 size-full drop-shadow-[2px_3px_2px_rgba(0,0,0,0.45)]"
      aria-hidden="true"
    >
      <Arrow from={[1816, 186]} to={[1846, 227]} size={16} />
      <Arrow from={[1188, 178]} to={[1168, 221]} size={15} />
      <Arrow from={[288, 265]} to={[459, 404]} size={20} />
      <Arrow from={[447, 688]} to={[236, 524]} size={20} />
      <Bubble x={1813} y={160} n={1} />
      <Bubble x={1210} y={160} n={2} />
      <Bubble x={312} y={283} n={3} />
    </svg>
  );
}

export default function App() {
  return (
    <div className="relative flex h-screen flex-col overflow-hidden bg-white font-['Open_Sans','Noto_Sans',sans-serif]">
      <div className="flex min-h-0 flex-1 flex-col px-0.5">
        <TitleBar />
        <Ribbon />
        <div className="flex h-[34px] shrink-0 items-center justify-between bg-[#ebebeb] pr-3 pb-1 pl-[5px] text-[13px] text-[#444]">
          Drag a column header to this grouping zone to categorize your grid data
          <button type="button" aria-label="Clear grouping" className="pt-1">
            <svg viewBox="0 0 16 18" className="h-[18px] w-4" aria-hidden="true">
              <path d="M0 1.500h16V4H0zM5 0h6v2H5z" fill="#3b78b8" />
              <path d="M1 5.500h14V18H1z" fill={DARK} />
              <path d="M4.500 8v7.500M8 8v7.500M11.500 8v7.500" stroke="#fff" strokeWidth="1.600" />
            </svg>
          </button>
        </div>

        <main className="flex min-h-0 flex-1 border-t border-[#b5b5b5]">
          <ViewsPanel />
          <button
            type="button"
            aria-label="Collapse views"
            className="flex w-5 shrink-0 items-center justify-center bg-[#955aa1] text-white"
          >
            <ChevronLeft className="size-4" strokeWidth={2} />
          </button>
          <section className="flex min-w-0 flex-1 flex-col">
            <div className="min-h-0 flex-1">
              <Grid />
            </div>
            <div className="flex h-[17px] shrink-0 items-center border-t border-[#e6e6e6] bg-[#fbfbfb] px-1.5">
              <span className="border-y-5 border-r-5 border-y-transparent border-r-[#3b4f7d]" />
              <span className="ml-[39%] h-[15px] flex-1 bg-[#8b8b8b]" />
              <span className="ml-1.5 border-y-5 border-l-5 border-y-transparent border-l-[#3b4f7d]" />
            </div>
          </section>
          <button
            type="button"
            aria-label="Open details"
            className="flex w-[43px] shrink-0 items-start gap-px bg-[#955aa1] pt-[9px] text-white"
          >
            <ChevronLeft className="mt-1 size-4 shrink-0" strokeWidth={3} />
            <svg
              viewBox="0 0 19 24"
              className="h-6 w-[19px] shrink-0"
              fill="none"
              stroke="currentColor"
              strokeWidth="1.500"
              aria-hidden="true"
            >
              <path d="M1 1h17v22H1z" />
              <path d="M3.500 6h1.500M6.500 6h9M3.500 10h1.500M6.500 10h7M3.500 14h1.500M6.500 14h5M3.500 18.500h1.500M6.500 18.500h9" />
            </svg>
          </button>
        </main>

        <div className="flex h-5 shrink-0 items-center bg-linear-to-b from-white to-[#f3f3f3] pt-0.5 pl-[5px] text-[12px] text-black">
          Rows Loaded: 174 | Rows Displayed: 9 | Rows Hidden: 165 | Rows Selected: 1
        </div>
        <footer className="flex h-5 shrink-0 items-center gap-2.5 bg-[#d1d1d1] pt-0.5 pr-2 pl-[3px] text-[11px] text-[#444]">
          <span className="mr-auto">Ready</span>
          <span className="text-[#b0b0b0]">CAP</span>
          <span>NUM</span>
          <span className="text-[#b0b0b0]">SCRL</span>
        </footer>
      </div>
      <div className="mt-px flex h-0.5 shrink-0 bg-[#444]">
        <span className="ml-12 w-72 bg-[#ddd]" />
      </div>

      <NewViewWindow />
      <Callouts />
    </div>
  );
}
